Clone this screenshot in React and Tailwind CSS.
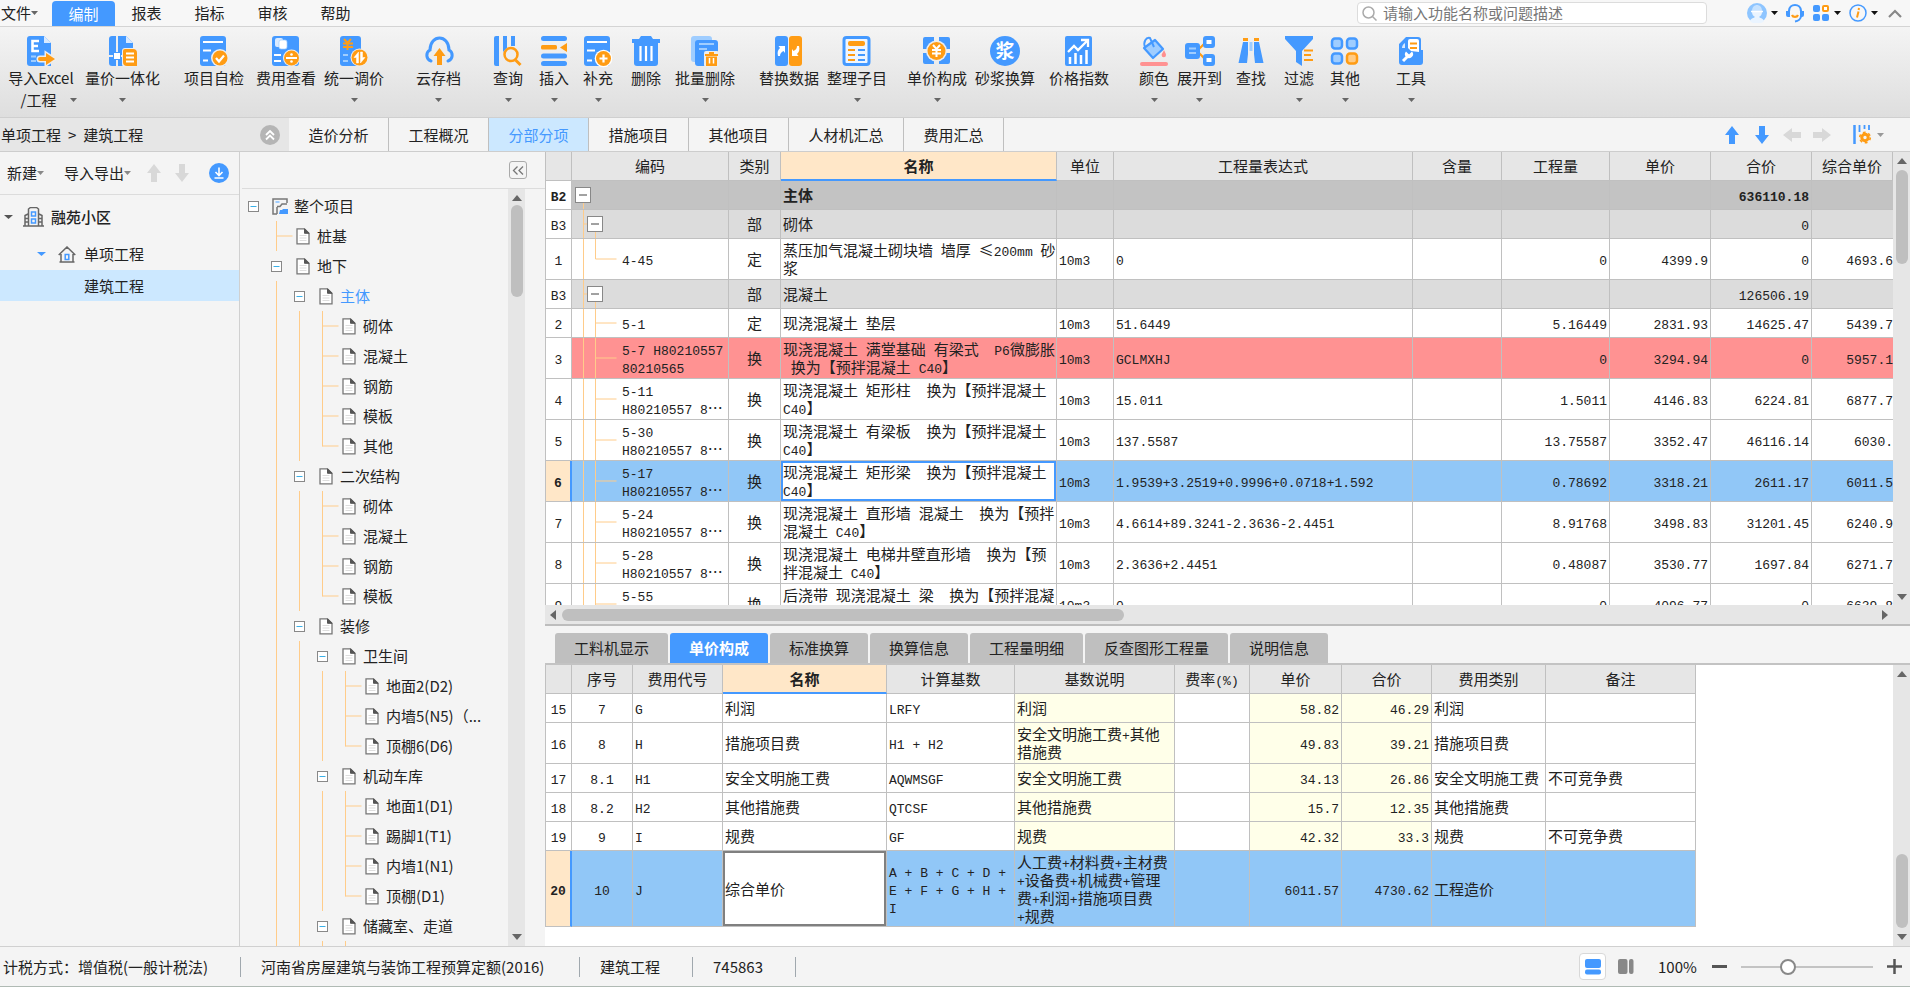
import { useState } from 'react'

const BLUE = '#4499ff'
const ORANGE = '#ff9c14'
const LIGHT = '#9fcdff'

/* ---------- toolbar icons, all on a 30x30 grid ---------- */

function Doc() {
  return <path d="M4 0h14l7 7v23H4a3 3 0 0 1-3-3V3a3 3 0 0 1 3-3z" fill={BLUE} />
}

const ICONS = {
  excel: (
    <>
      <Doc />
      <path d="M18 0l7 7h-7z" fill="#d9eaff" />
      <path d="M13 5H6.500v10H13M7 10h5" stroke="#fff" strokeWidth="2.600" fill="none" />
      <path d="M5 20.500h5M5 25h5" stroke={LIGHT} strokeWidth="2" />
      <path d="M14 21h6v-4l9 6-9 6v-4h-6a2 2 0 0 1 0-4z" fill="#eee" stroke="#eee" strokeWidth="3" />
      <path d="M14 21h6v-4l9 6-9 6v-4h-6a2 2 0 0 1 0-4z" fill={ORANGE} />
    </>
  ),
  merge: (
    <>
      <Doc />
      <path d="M18 0l7 7h-7z" fill="#d9eaff" />
      <path d="M9 0v30M0 20h16" stroke="#eee" strokeWidth="2" />
      <rect x="5.500" y="16.500" width="7" height="7" fill="#fff" stroke={BLUE} />
      <rect x="14" y="12" width="15" height="19" rx="3" fill="#eee" />
      <path d="M17 13h8a4 4 0 0 1 4 4v13H19a4 4 0 0 1-4-4V15a2 2 0 0 1 2-2z" fill={ORANGE} />
      <path d="M18 17.500h8M18 21.500h8M18 25.500h8" stroke="#fff" strokeWidth="1.800" />
    </>
  ),
  check: (
    <>
      <rect x="1" width="26" height="30" rx="3" fill={BLUE} />
      <path d="M4 6h20M4 14.500h8M4 24.500h5" stroke="#fff" strokeWidth="2" />
      <circle cx="21" cy="22" r="9" fill="#eee" />
      <circle cx="21" cy="22" r="7.500" fill={ORANGE} />
      <path d="M17 22l3 3.500 5-6" stroke="#fff" strokeWidth="2.200" fill="none" />
    </>
  ),
  fee: (
    <>
      <rect x="1" width="27" height="30" rx="3" fill={BLUE} />
      <rect x="4" y="2" width="8" height="9" rx="2" fill="#d9eaff" />
      <rect x="8" y="4" width="8" height="9" rx="2" fill="#fff" stroke={LIGHT} strokeWidth=".7" />
      <path d="M3 19h7M3 25h7" stroke="#fff" strokeWidth="2" />
      <circle cx="20.500" cy="22" r="8.500" fill="#eee" />
      <circle cx="20.500" cy="22" r="7.500" fill={ORANGE} />
      <path d="M15 22h11" stroke="#fff" strokeWidth="2" />
      <circle cx="20.500" cy="18.500" r="1.300" fill="#fff" />
      <circle cx="20.500" cy="25.500" r="1.300" fill="#fff" />
    </>
  ),
  adjust: (
    <>
      <rect x="1" width="21" height="30" rx="3" fill={BLUE} />
      <path d="M5 3l3.500 4L12 3M4 7.500h10M4 11h10M8.500 6v8" stroke={ORANGE} strokeWidth="2" fill="none" />
      <path d="M4 19h5M4 25h5" stroke={LIGHT} strokeWidth="2" />
      <circle cx="20.500" cy="21.500" r="9" fill="#eee" />
      <circle cx="20.500" cy="21.500" r="8" fill={ORANGE} />
      <path d="M19.500 16v11h-2v-5.500h-2.500zM21.500 27V16h2v5.500H26z" fill="#fff" stroke="#fff" strokeWidth=".5" />
    </>
  ),
  cloud: (
    <>
      <path d="M7 25a6 6 0 0 1-1-11C6 6 11 2 15.500 2S25 6 25 14a6 6 0 0 1-1 11" stroke={BLUE} strokeWidth="3" fill="none" strokeLinecap="round" />
      <path d="M15.500 12l6 8h-3.500v9h-5v-9H9.500z" fill={ORANGE} />
    </>
  ),
  query: (
    <>
      <path d="M3 0h3v30H3a2 2 0 0 1-2-2V2a2 2 0 0 1 2-2zM10 0h4v12l-4 4zM18 0h4v10h-4z" fill={BLUE} />
      <circle cx="18" cy="18.500" r="6.500" stroke={ORANGE} strokeWidth="2.500" fill="#eee" />
      <path d="M22.500 24l5 5" stroke={ORANGE} strokeWidth="3" />
    </>
  ),
  insert: (
    <>
      <rect x="2" width="26" height="5" rx="2.500" fill={BLUE} />
      <rect x="2" y="9" width="16" height="4.500" rx="1.500" fill={ORANGE} />
      <path d="M28 7v9l-7-4.500z" fill={ORANGE} />
      <rect x="2" y="17.500" width="26" height="5" rx="2.500" fill={BLUE} />
      <rect x="2" y="25" width="26" height="5" rx="2.500" fill={BLUE} />
    </>
  ),
  add: (
    <>
      <rect x="1" width="26" height="30" rx="3" fill={BLUE} />
      <path d="M4 6h20M4 14.500h8M4 24.500h5" stroke="#fff" strokeWidth="2" />
      <circle cx="20.500" cy="22.500" r="8.800" fill="#fff" />
      <circle cx="20.500" cy="22.500" r="7.500" fill={ORANGE} />
      <path d="M16.500 22.500h8M20.500 18.500v8" stroke="#fff" strokeWidth="2.200" />
    </>
  ),
  trash: (
    <>
      <path d="M10 0h10l2 3h7v4H1V3h7z" fill={BLUE} />
      <path d="M3 7h24v20a3 3 0 0 1-3 3H6a3 3 0 0 1-3-3z" fill={BLUE} />
      <path d="M9.500 10v15M15 10v15M20.500 10v15" stroke="#fff" strokeWidth="2.200" />
    </>
  ),
  batch: (
    <>
      <rect x="1" width="21" height="26" rx="3" fill={LIGHT} />
      <rect x="5" y="4" width="23" height="26" rx="3" fill={BLUE} />
      <path d="M9 8h15M9 13h8" stroke={LIGHT} strokeWidth="2" />
      <rect x="14" y="15" width="15" height="16" rx="2" fill="#eee" />
      <path d="M15 18h13v2H15zM16 20.500h11V30H16zM19 16h5v2h-5z" fill={ORANGE} />
      <path d="M19.500 22v5.500M23.500 22v5.500" stroke="#fff" strokeWidth="1.500" />
    </>
  ),
  replace: (
    <>
      <rect x="1" width="13" height="30" rx="3" fill={BLUE} />
      <rect x="15" width="13" height="30" rx="3" fill={ORANGE} />
      <path d="M4 20c-1-4 0-6 2-8l-1.500-2H11v7l-1.500-2C7 16 6 18 6 20z" fill="#fff" />
      <path d="M25 10c1 4 0 6-2 8l1.500 2H18v-7l1.500 2c2.500-1 3.500-3 3.500-5z" fill="#fff" />
    </>
  ),
  sort: (
    <>
      <rect x="2" y="1.500" width="25" height="27" rx="2.500" fill="#eef5ff" stroke={BLUE} strokeWidth="3" />
      <rect x="6" y="5" width="17" height="5" rx="2" fill={ORANGE} />
      <path d="M6 14h7M6 19h7M6 24h7" stroke={ORANGE} strokeWidth="2" />
      <path d="M16 14h7M16 19h7M16 24h7" stroke={BLUE} strokeWidth="2" />
    </>
  ),
  price: (
    <>
      <path d="M1 3a2 2 0 0 1 2-2h9v6l-6 6H1zM17 1h9a2 2 0 0 1 2 2v10h-5l-6-6zM1 17h5l6 6v5H3a2 2 0 0 1-2-2zM28 17v9a2 2 0 0 1-2 2h-9v-5l6-6z" fill={BLUE} />
      <circle cx="14.500" cy="15" r="10.500" fill="#eee" />
      <circle cx="14.500" cy="15" r="9" fill={ORANGE} />
      <path d="M11 9l3.500 4L18 9M10 14h9M10 17.500h9M14.500 13v8" stroke="#fff" strokeWidth="2" fill="none" />
    </>
  ),
  mortar: (
    <>
      <circle cx="15" cy="15" r="15" fill={BLUE} />
      <text x="15" y="22" textAnchor="middle" fontSize="19" fontWeight="700" fill="#fff">浆</text>
    </>
  ),
  index: (
    <>
      <rect x="1" width="27" height="30" rx="2" fill={BLUE} />
      <path d="M4 16l6-6 4 4 9-9M17 4h7v7" stroke="#fff" strokeWidth="2.300" fill="none" />
      <path d="M6 28v-7M11.500 28V17M17 28v-9M22.500 28V14" stroke="#fff" strokeWidth="2.500" />
    </>
  ),
  color: (
    <>
      <path d="M5 12L16 4l8 9-10 9z" fill={LIGHT} stroke={BLUE} strokeWidth="2.200" strokeLinejoin="round" />
      <path d="M6 11C4 6 7 1 11 2l4 9" stroke={BLUE} strokeWidth="2" fill="none" />
      <path d="M25 14c1.500 3 2 4 2 5a2.200 2.200 0 0 1-4.400 0c0-1 1-2 2.400-5z" fill="#ff8f8f" />
      <rect x="1" y="26" width="28" height="4" rx="2" fill="#ff9292" />
    </>
  ),
  expand: (
    <>
      <path d="M14 13l6-6M14 17l6 6" stroke={ORANGE} strokeWidth="2.200" />
      <rect x="0" y="7" width="15" height="16" rx="3" fill={BLUE} />
      <path d="M4 12.500h7M4 17h7" stroke={LIGHT} strokeWidth="2" />
      <rect x="18" y="0" width="12" height="12" rx="3" fill={BLUE} />
      <rect x="18" y="18" width="12" height="12" rx="3" fill={BLUE} />
      <rect x="21.500" y="4" width="5" height="4" fill="#fff" />
      <rect x="21.500" y="22" width="5" height="4" fill="#fff" />
    </>
  ),
  find: (
    <>
      <path d="M7 2h5v3H7zM18 2h5v3h-5z" fill={ORANGE} />
      <path d="M7 6h5v12l-1 9H2.500zM18 6h5l4.500 21H19l-1-9z" fill={BLUE} />
      <path d="M13.500 6h3v9h-3z" fill={LIGHT} />
    </>
  ),
  filter: (
    <>
      <path d="M1 0h28v3L18 15v15l-6-4V15L1 3z" fill={BLUE} />
      <path d="M20 14.500h9M20 19h7M20 24h9" stroke={ORANGE} strokeWidth="2" />
    </>
  ),
  other: (
    <>
      <rect x="2" y="2.500" width="10" height="10" rx="3" fill={LIGHT} stroke={BLUE} strokeWidth="2.500" />
      <rect x="17" y="2.500" width="10" height="10" rx="3" fill={LIGHT} stroke={BLUE} strokeWidth="2.500" />
      <rect x="2" y="17.500" width="10" height="10" rx="3" fill={LIGHT} stroke={BLUE} strokeWidth="2.500" />
      <rect x="17" y="17.500" width="10" height="10" rx="3" fill="#ffcb85" stroke={ORANGE} strokeWidth="2.500" />
    </>
  ),
  tool: (
    <>
      <path d="M3 26V8l7-7h12a3 3 0 0 1 3 3v10h2v12a3 3 0 0 1-3 3H6a3 3 0 0 1-3-3z" fill={BLUE} />
      <path d="M12 5a2 2 0 0 1 2-2h7a2 2 0 0 1 2 2v11l-8-1-3-3z" fill="#fff" />
      <path d="M14 7.500h7M14 12h7" stroke={ORANGE} strokeWidth="2.200" />
      <path d="M6 12c0-2 1-4 3-5v5z" fill="#d9eaff" />
      <path d="M7 25l6-6" stroke="#fff" strokeWidth="3" />
      <path d="M10 15.500l3 3 3-3a4 4 0 1 1-6 0z" fill="#fff" />
    </>
  ),
}

function Icon({ name }) {
  return (
    <svg width="30" height="30" viewBox="0 0 30 30" className="shrink-0 overflow-visible" aria-hidden="true">
      {ICONS[name]}
    </svg>
  )
}

function Caret({ color = '#666', size = 7 }) {
  return (
    <svg width={size} height="4" viewBox="0 0 8 4" preserveAspectRatio="none" className="shrink-0" aria-hidden="true">
      <path d="M0 0h8L4 4z" fill={color} />
    </svg>
  )
}

const TOOLS = [
  { icon: 'excel', label: '导入Excel', second: '/工程', drop: true, box: 'w-[72px] ml-[5px]' },
  { icon: 'merge', label: '量价一体化', drop: true, box: 'w-[75px] ml-2' },
  { icon: 'check', label: '项目自检', box: 'w-[60px] ml-6' },
  { icon: 'fee', label: '费用查看', box: 'w-[60px] ml-3' },
  { icon: 'adjust', label: '统一调价', drop: true, box: 'w-[60px] ml-2' },
  { icon: 'cloud', label: '云存档', drop: true, box: 'w-[45px] ml-8' },
  { icon: 'query', label: '查询', drop: true, box: 'w-[30px] ml-8' },
  { icon: 'insert', label: '插入', drop: true, box: 'w-[30px] ml-4' },
  { icon: 'add', label: '补充', drop: true, box: 'w-[30px] ml-3.5' },
  { icon: 'trash', label: '删除', box: 'w-[30px] ml-4.5' },
  { icon: 'batch', label: '批量删除', drop: true, box: 'w-[60px] ml-3.5' },
  { icon: 'replace', label: '替换数据', box: 'w-[60px] ml-6' },
  { icon: 'sort', label: '整理子目', drop: true, box: 'w-[60px] ml-2' },
  { icon: 'price', label: '单价构成', drop: true, box: 'w-[60px] ml-5' },
  { icon: 'mortar', label: '砂浆换算', box: 'w-[60px] ml-2' },
  { icon: 'index', label: '价格指数', box: 'w-[60px] ml-3.5' },
  { icon: 'color', label: '颜色', drop: true, box: 'w-[30px] ml-7.5' },
  { icon: 'expand', label: '展开到', drop: true, box: 'w-[45px] ml-2' },
  { icon: 'find', label: '查找', box: 'w-[30px] ml-3.5' },
  { icon: 'filter', label: '过滤', drop: true, box: 'w-[30px] ml-4.5' },
  { icon: 'other', label: '其他', drop: true, box: 'w-[30px] ml-4' },
  { icon: 'tool', label: '工具', drop: true, box: 'w-[30px] ml-9' },
]

function MenuBar() {
  return (
    <header className="flex h-[27px] shrink-0 items-center border-b border-[#d4d4d4] bg-[#f7f7f7]">
      <button className="flex w-[52px] items-center pl-px">
        文件
        <Caret />
      </button>
      {['编制', '报表', '指标', '审核', '帮助'].map((m, i) => (
        <button
          key={m}
          className={i === 0 ? 'mt-px h-[25px] w-[63px] rounded-t-[4px] bg-[#4499ff] text-white' : 'h-[25px] w-[63px]'}
        >
          {m}
        </button>
      ))}
      <label className="ml-auto flex h-[22px] w-[350px] items-center gap-1.5 rounded-[4px] border border-[#dcdcdc] bg-white pl-1">
        <svg width="15" height="15" viewBox="0 0 15 15" fill="none" stroke="#aaa" strokeWidth="1.500" aria-hidden="true">
          <circle cx="6.500" cy="6.500" r="5.500" />
          <path d="M10.500 10.500l4 4" />
        </svg>
        <input
          aria-label="搜索"
          placeholder="请输入功能名称或问题描述"
          className="h-5 min-w-0 flex-1 bg-transparent outline-none placeholder:text-[#777]"
        />
      </label>
      <div className="ml-10 flex items-center pr-2">
        <button aria-label="用户" className="flex items-center gap-1">
          <svg width="20" height="20" viewBox="0 0 20 20">
            <circle cx="10" cy="10" r="10" fill="#8ec5ff" />
            <path d="M3 18c1-3 4-3 5-4-2-1-3-3-3-5h10c0 2-1 4-3 5 1 1 4 1 5 4a10 10 0 0 1-14 0z" fill="#eaf4ff" />
            <path d="M5 8c0-8 10-8 10 0z" fill="#c6e2ff" />
            <path d="M4 8.500h12" stroke="#fff" strokeWidth="1.500" />
          </svg>
          <Caret color="#111" />
        </button>
        <button aria-label="客服" className="ml-2">
          <svg width="18" height="20" viewBox="0 0 18 20" fill="none">
            <path d="M3 8C3 0 15 0 15 8" stroke={BLUE} strokeWidth="2.200" />
            <path d="M0 8h4v6H2a2 2 0 0 1-2-2zM14 8h4v4a2 2 0 0 1-2 2h-2z" fill={BLUE} />
            <path d="M15 13c0 3-3 5-6 5.500" stroke={BLUE} strokeWidth="2" />
            <path d="M6 12c1 2.500 5 2.500 6 0" stroke={ORANGE} strokeWidth="2.200" />
          </svg>
        </button>
        <button aria-label="应用" className="ml-2 flex items-center gap-1">
          <svg width="18" height="18" viewBox="0 0 18 18">
            <rect x="1" y="1" width="7" height="7" rx="2" fill={BLUE} />
            <rect x="11" y="2" width="5" height="5" rx="1" fill="#fff" stroke={ORANGE} strokeWidth="2" />
            <rect x="1" y="10" width="7" height="7" rx="2" fill={BLUE} />
            <rect x="10" y="10" width="7" height="7" rx="2" fill={BLUE} />
          </svg>
          <Caret color="#111" />
        </button>
        <button aria-label="关于" className="ml-2 flex items-center gap-1">
          <svg width="18" height="18" viewBox="0 0 18 18" fill="none">
            <circle cx="9" cy="9" r="8" stroke={BLUE} strokeWidth="1.500" />
            <path d="M9.500 7.500L8 13.500M10 4l-.4 2" stroke={ORANGE} strokeWidth="2" />
          </svg>
          <Caret color="#111" />
        </button>
        <button aria-label="收起" className="ml-2.5">
          <svg width="14" height="9" viewBox="0 0 14 9" fill="none" stroke="#888" strokeWidth="2.200">
            <path d="M1 8l6-6 6 6" />
          </svg>
        </button>
      </div>
    </header>
  )
}

function Toolbar() {
  return (
    <div className="flex h-[91px] shrink-0 items-start border-b border-[#cfcfcf] bg-linear-to-b from-[#f4f4f4] to-[#dedede] pt-[9px]">
      {TOOLS.map(({ icon, label, second, drop, box }) => (
        <button key={label} className={`flex shrink-0 flex-col items-center whitespace-nowrap ${box}`}>
          <Icon name={icon} />
          <span className="mt-px leading-[22px]">{label}</span>
          <span className="flex h-[22px] items-center gap-3.5">
            {second && <span className="ml-4">{second}</span>}
            {drop && <Caret />}
          </span>
        </button>
      ))}
    </div>
  )
}

function Arrow({ dir, color = '#d8d8d8' }) {
  const turn = { up: 'rotate-0', down: 'rotate-180', left: '-rotate-90', right: 'rotate-90' }[dir]
  return (
    <svg width="14" height="18" viewBox="0 0 14 18" className={turn} aria-hidden="true">
      <path d="M7 0l7 9h-4v9H4V9H0z" fill={color} />
    </svg>
  )
}

const TABS = ['造价分析', '工程概况', '分部分项', '措施项目', '其他项目', '人材机汇总', '费用汇总']

function TabRow() {
  const [tab, setTab] = useState('分部分项')
  return (
    <div className="flex h-[34px] shrink-0 border-b border-[#cdcdcd]">
      <div className="flex w-[289px] items-center justify-between bg-[#e6e6e6] pr-[9px] pl-px">
        <span className="flex gap-[7px]">
          <span>单项工程</span>
          <span>&gt;</span>
          <span>建筑工程</span>
        </span>
        <button aria-label="收起导航">
          <svg width="20" height="20" viewBox="0 0 20 20" fill="none">
            <circle cx="10" cy="10" r="10" fill="#b5b5b5" />
            <path d="M6 10l4-4 4 4M6 14.500l4-4 4 4" stroke="#fff" strokeWidth="1.800" />
          </svg>
        </button>
      </div>
      {TABS.map((t) => (
        <button
          key={t}
          onClick={() => setTab(t)}
          className={`border-r border-[#bfbfbf] px-[19px] ${t.length === 4 ? 'w-[100px]' : 'w-[115px]'} ${
            t === tab ? 'bg-[#cce8ff] text-[#4499ff]' : ''
          }`}
        >
          {t}
        </button>
      ))}
      <div className="ml-auto flex items-center gap-4 pr-[26px]">
        <button aria-label="上移"><Arrow dir="up" color={BLUE} /></button>
        <button aria-label="下移"><Arrow dir="down" color={BLUE} /></button>
        <button aria-label="后退"><Arrow dir="left" /></button>
        <button aria-label="前进"><Arrow dir="right" /></button>
        <button aria-label="列设置" className="ml-2 flex items-center gap-1.5">
          <svg width="18" height="19" viewBox="0 0 18 19">
            <path d="M1.500 0v19" stroke={BLUE} strokeWidth="2.500" />
            <path d="M6.500 0v7M11.500 0v4M16 0v5" stroke={BLUE} strokeWidth="1.800" />
            <circle cx="12" cy="12.500" r="3.200" fill="none" stroke={ORANGE} strokeWidth="3" />
            <circle cx="12" cy="12.500" r="5.300" fill="none" stroke={ORANGE} strokeWidth="1.600" strokeDasharray="2.800 2.750" />
          </svg>
          <Caret color="#999" />
        </button>
      </div>
    </div>
  )
}

/* ---------- left panels ---------- */

function ProjectPanel() {
  return (
    <aside className="flex w-60 shrink-0 flex-col border-r border-[#d0d0d0]">
      <div className="flex h-[43px] items-center border-b border-[#dcdcdc] pr-2.5 pl-[7px]">
        <button className="flex items-center">新建<Caret color="#888" /></button>
        <button className="ml-5 flex items-center">导入导出<Caret color="#888" /></button>
        <button aria-label="上移" className="ml-4"><Arrow dir="up" /></button>
        <button aria-label="下移" className="ml-3.5"><Arrow dir="down" /></button>
        <button aria-label="下载" className="ml-auto">
          <svg width="20" height="20" viewBox="0 0 20 20" fill="none">
            <circle cx="10" cy="10" r="10" fill={BLUE} />
            <path d="M10 4.500v7.500M6.500 9l3.500 3.500L13.500 9M5.500 15h9" stroke="#fff" strokeWidth="1.600" />
          </svg>
        </button>
      </div>
      <div className="flex h-[43px] items-center pl-1">
        <Caret color="#555" size={9} />
        <svg width="21" height="20" viewBox="0 0 21 20" fill="none" className="ml-2.5" aria-hidden="true">
          <path d="M0 19h21M5.500 19V2l2-1.500h6L15.500 2v17M2 19V8.500l3-1.500M19 19V8.500L16 7M2 11.500h3M2 15h3M16 11.500h3M16 15h3" stroke="#666" strokeWidth="1.500" />
          <path d="M8.500 5h4v4h-4zM8.500 12h4v4h-4z" stroke={BLUE} strokeWidth="1.500" />
        </svg>
        <span className="ml-[7px] font-medium">融苑小区</span>
      </div>
      <div className="flex h-8 items-center pl-[37px]">
        <Caret color={BLUE} size={9} />
        <svg width="18" height="17" viewBox="0 0 18 17" fill="none" className="ml-3" aria-hidden="true">
          <path d="M.7 9L9 1l8.300 8M3 8v8M15 8v8M1.500 16h15" stroke="#666" strokeWidth="1.500" />
          <path d="M7.200 8.500h3.600v5H7.200z" stroke={BLUE} strokeWidth="1.500" />
        </svg>
        <span className="ml-2">单项工程</span>
      </div>
      <div className="flex h-[31px] items-center bg-[#cce8ff] pl-[84px]">建筑工程</div>
    </aside>
  )
}

// guide letters: blank "_", vertical "|", tee "+", elbow "L", expander "-"
const TREE = [
  ['-', '整个项目'],
  ['_+', '桩基'],
  ['_-', '地下'],
  ['_|-', '主体'],
  ['_||+', '砌体'],
  ['_||+', '混凝土'],
  ['_||+', '钢筋'],
  ['_||+', '模板'],
  ['_||L', '其他'],
  ['_|-', '二次结构'],
  ['_||+', '砌体'],
  ['_||+', '混凝土'],
  ['_||+', '钢筋'],
  ['_||L', '模板'],
  ['_|-', '装修'],
  ['_||-', '卫生间'],
  ['_|||+', '地面2(D2)'],
  ['_|||+', '内墙5(N5)（...'],
  ['_|||L', '顶棚6(D6)'],
  ['_||-', '机动车库'],
  ['_|||+', '地面1(D1)'],
  ['_|||+', '踢脚1(T1)'],
  ['_|||+', '内墙1(N1)'],
  ['_|||L', '顶棚(D1)'],
  ['_||-', '储藏室、走道'],
  ['_||||', ''],
]

const GUIDES = {
  '|': 'M11.500 0v30',
  '+': 'M11.500 0v30M11.500 15h16',
  L: 'M11.500 0v15.500M11.500 15h16',
}

function Guide({ kind }) {
  if (kind === '_') return <span className="w-[23px]" />
  if (kind === '-') {
    return (
      <button aria-label="折叠" className="flex w-[23px] items-center justify-center">
        <svg width="11" height="11" viewBox="0 0 11 11">
          <rect x=".5" y=".5" width="10" height="10" fill="#fff" stroke="#888" />
          <path d="M2.500 5.500h6" stroke="#3ab0e8" />
        </svg>
      </button>
    )
  }
  return (
    <svg width="23" height="30" className="shrink-0 overflow-visible" aria-hidden="true">
      <path d={GUIDES[kind]} stroke="#ffcc8a" strokeWidth="1" fill="none" />
    </svg>
  )
}

function PageIcon() {
  return (
    <svg width="16" height="17" viewBox="0 0 16 17" fill="none" aria-hidden="true">
      <path d="M2 .8h7.500l4.500 4.500v10.500H2z" fill="#fff" stroke="#777" strokeWidth="1.300" />
      <path d="M9.500.8v4.500H14z" fill="#555" stroke="#555" />
      <path d="M4.500 7.500h7M4.500 10h7M4.500 12.500h7" stroke="#ddd" />
    </svg>
  )
}

function RootIcon() {
  return (
    <svg width="16" height="17" viewBox="0 0 16 17" fill="none" aria-hidden="true">
      <path d="M15 5V1H1v15h4M5 8.500h3L10 6h5M5 16V9" stroke="#777" strokeWidth="1.500" />
      <path d="M3.500 4h4" stroke={LIGHT} strokeWidth="2" />
      <path d="M7 16l1-4h2l1-1h5v5z" fill={BLUE} />
    </svg>
  )
}

function VScroll({ className = '', children }) {
  return (
    <div className={`flex w-[17px] shrink-0 flex-col items-center justify-between bg-[#e6e6e6] py-1.5 ${className}`}>
      <svg width="10" height="6" viewBox="0 0 10 6" aria-hidden="true"><path d="M5 0l5 6H0z" fill="#666" /></svg>
      {children}
      <svg width="10" height="6" viewBox="0 0 10 6" aria-hidden="true"><path d="M5 6l5-6H0z" fill="#666" /></svg>
    </div>
  )
}

function TreePanel() {
  return (
    <aside className="flex w-[305px] shrink-0 flex-col pl-0.5">
      <div className="flex h-[37px] shrink-0 items-center justify-end border-b border-[#dcdcdc] pr-[18px]">
        <button aria-label="收起目录" className="flex size-[18px] items-center justify-center rounded-[3px] border border-[#aaa]">
          <svg width="12" height="9" viewBox="0 0 12 9" fill="none" stroke="#777" strokeWidth="1.300">
            <path d="M5.500.5l-4 4 4 4M11 .5l-4 4 4 4" />
          </svg>
        </button>
      </div>
      <div className="flex min-h-0 flex-1 pr-5">
        <ul className="min-w-0 flex-1 overflow-hidden pt-0.5">
          {TREE.map(([guides, label], i) => (
            <li key={i} className="flex h-[30px]">
              {[...guides].map((g, k) => <Guide key={k} kind={g} />)}
              {label && (
                <span className={`ml-[7px] flex items-center gap-1.5 whitespace-nowrap ${label === '主体' ? 'text-[#4499ff]' : ''}`}>
                  {i === 0 ? <RootIcon /> : <PageIcon />}
                  {label}
                </span>
              )}
            </li>
          ))}
        </ul>
        <VScroll>
          <div className="mt-1 mb-auto h-[92px] w-3 rounded-full bg-[#bfbfbf]" />
        </VScroll>
      </div>
    </aside>
  )
}

/* ---------- grids ---------- */

// Latin runs are set in a narrower mono face than the Chinese around them
function Mixed({ text }) {
  return text.split(/([\x20-\x7e]+)/).map((run, i) =>
    i % 2 ? <span key={i} className="font-['Liberation_Mono',monospace] text-[13px] leading-none">{run}</span> : run
  )
}

const LINE = 'border-r border-b border-[#c0c0c0]'

function Head({ cols, active }) {
  return (
    <thead>
      <tr className="h-[29px]">
        {cols.map((c, i) => (
          <th
            key={i}
            scope="col"
            className={`${LINE} whitespace-nowrap ${
              c === active ? 'border-b-2 border-b-[#4499ff] bg-[#ffe7c8] font-bold' : 'bg-[#e6e6e6] font-normal'
            }`}
          >
            <Mixed text={c} />
          </th>
        ))}
      </tr>
    </thead>
  )
}

function Cell({ text = '', className = '' }) {
  return (
    <td className={`${LINE} overflow-hidden px-0.5 whitespace-pre ${className}`}>
      <Mixed text={text} />
    </td>
  )
}

const ITEM_COLS = ['', '编码', '类别', '名称', '单位', '工程量表达式', '含量', '工程量', '单价', '合价', '综合单价']

const ITEMS = [
  { no: 'B2', level: 'b2', name: '主体', total: '636110.18' },
  { no: 'B3', level: 'b3', type: '部', name: '砌体', total: '0' },
  { no: '1', code: '4-45', last: true, type: '定', name: '蒸压加气混凝土砌块墙 墙厚 ≤200mm 砂\n浆', expr: '0', qty: '0', price: '4399.9', total: '0', full: '4693.6' },
  { no: 'B3', level: 'b3', type: '部', name: '混凝土', total: '126506.19' },
  { no: '2', code: '5-1', single: true, type: '定', name: '现浇混凝土 垫层', expr: '51.6449', qty: '5.16449', price: '2831.93', total: '14625.47', full: '5439.7' },
  { no: '3', code: '5-7 H80210557\n80210565', tone: 'red', type: '换', name: '现浇混凝土 满堂基础 有梁式  P6微膨胀\n 换为【预拌混凝土 C40】', expr: 'GCLMXHJ', qty: '0', price: '3294.94', total: '0', full: '5957.1' },
  { no: '4', code: '5-11\nH80210557 8…', type: '换', name: '现浇混凝土 矩形柱  换为【预拌混凝土\nC40】', expr: '15.011', qty: '1.5011', price: '4146.83', total: '6224.81', full: '6877.7' },
  { no: '5', code: '5-30\nH80210557 8…', type: '换', name: '现浇混凝土 有梁板  换为【预拌混凝土\nC40】', expr: '137.5587', qty: '13.75587', price: '3352.47', total: '46116.14', full: '6030.' },
  { no: '6', code: '5-17\nH80210557 8…', tone: 'blue', type: '换', name: '现浇混凝土 矩形梁  换为【预拌混凝土\nC40】', expr: '1.9539+3.2519+0.9996+0.0718+1.592', qty: '0.78692', price: '3318.21', total: '2611.17', full: '6011.5' },
  { no: '7', code: '5-24\nH80210557 8…', type: '换', name: '现浇混凝土 直形墙 混凝土  换为【预拌\n混凝土 C40】', expr: '4.6614+89.3241-2.3636-2.4451', qty: '8.91768', price: '3498.83', total: '31201.45', full: '6240.9' },
  { no: '8', code: '5-28\nH80210557 8…', type: '换', name: '现浇混凝土 电梯井壁直形墙  换为【预\n拌混凝土 C40】', expr: '2.3636+2.4451', qty: '0.48087', price: '3530.77', total: '1697.84', full: '6271.7' },
  { no: '9', code: '5-55\n ', type: '换', name: '后浇带 现浇混凝土 梁  换为【预拌混凝\n ', expr: '0', qty: '0', price: '4096.77', total: '0', full: '6639.8' },
]

function CodeGuide({ row, h }) {
  const mid = h / 2
  let lines = `M11.500 0v${h}M23.500 0v${row.last ? mid : h}M23.500 ${mid}h21`
  if (row.level === 'b2') lines = `M11.500 ${mid}v${h - mid}`
  if (row.level === 'b3') lines = `M11.500 0v${h}M11.500 ${mid}h12M23.500 ${mid}v${h - mid}`
  const boxX = row.level === 'b2' ? 3.5 : 15.5
  const drawing = (
    <svg width="45" height={h} className="block shrink-0" aria-hidden="true">
      <path d={lines} stroke="#ffcc8a" fill="none" />
      {row.level && (
        <>
          <rect x={boxX} y={mid - 7.5} width="15" height="15" fill="#fff" stroke="#888" />
          <path d={`M${boxX + 3.5} ${mid}h8`} stroke="#444" />
        </>
      )}
    </svg>
  )
  return row.level ? <button aria-label="折叠" className="block shrink-0">{drawing}</button> : drawing
}

function ItemRow({ row }) {
  const single = row.level || row.single
  const bg = row.level === 'b2' ? 'bg-[#c3c3c3] font-bold' : row.level ? 'bg-[#dcdcdc]' : row.tone === 'red' ? 'bg-[#ff9292]' : row.tone === 'blue' ? 'bg-[#91c7f7]' : 'bg-white'
  const on = row.tone === 'blue'
  return (
    <tr className={`${single ? 'h-[29px]' : 'h-[41px]'} ${bg}`}>
      <Cell text={row.no} className={`text-center ${on ? 'border-r-2 border-r-[#4499ff] bg-[#ffe7c8] font-bold' : 'bg-white'}`} />
      <td className={`${LINE} overflow-hidden`}>
        <div className="flex items-center gap-[5px]">
          <CodeGuide row={row} h={single ? 28 : 40} />
          <span className="whitespace-pre"><Mixed text={row.code || ''} /></span>
        </div>
      </td>
      <Cell text={row.type} className="text-center" />
      <Cell text={row.name} className={on ? 'bg-white shadow-[inset_0_0_0_2px_#4499ff]' : ''} />
      <Cell text={row.level ? '' : '10m3'} />
      <Cell text={row.expr} />
      <Cell />
      <Cell text={row.qty} className="text-right" />
      <Cell text={row.price} className="text-right" />
      <Cell text={row.total} className="text-right" />
      <td className="overflow-hidden border-b border-[#c0c0c0] text-right whitespace-pre"><Mixed text={row.full || ''} /></td>
    </tr>
  )
}

function ItemGrid() {
  return (
    <section className="flex min-h-0 flex-1">
      <div className="flex min-w-0 flex-1 flex-col">
        <div className="min-h-0 flex-1 overflow-hidden border-l border-[#c0c0c0] bg-white">
          <table className="w-full table-fixed border-separate border-spacing-0 leading-[18px]">
            <colgroup>
              <col className="w-[26px]" />
              <col className="w-[157px]" />
              <col className="w-[52px]" />
              <col className="w-[276px]" />
              <col className="w-[57px]" />
              <col />
              <col className="w-[89px]" />
              <col className="w-[108px]" />
              <col className="w-[101px]" />
              <col className="w-[101px]" />
              <col className="w-[81px]" />
            </colgroup>
            <Head cols={ITEM_COLS} active="名称" />
            <tbody>
              {ITEMS.map((row, i) => <ItemRow key={i} row={row} />)}
            </tbody>
          </table>
        </div>
        <div className="flex h-[19px] shrink-0 items-center gap-1.5 bg-[#e6e6e6] px-[5px]">
          <svg width="6" height="10" viewBox="0 0 6 10" aria-hidden="true"><path d="M6 0v10L0 5z" fill="#666" /></svg>
          <div className="h-3 w-[42%] rounded-full bg-[#bfbfbf]" />
          <svg width="6" height="10" viewBox="0 0 6 10" className="ml-auto" aria-hidden="true"><path d="M0 0v10l6-5z" fill="#666" /></svg>
        </div>
      </div>
      <VScroll className="pb-6">
        <div className="mt-1.5 mb-auto h-[94px] w-3 rounded-full bg-[#bfbfbf]" />
      </VScroll>
    </section>
  )
}

const DETAIL_TABS = ['工料机显示', '单价构成', '标准换算', '换算信息', '工程量明细', '反查图形工程量', '说明信息']

const FEE_COLS = ['', '序号', '费用代号', '名称', '计算基数', '基数说明', '费率(%)', '单价', '合价', '费用类别', '备注']

const FEES = [
  ['15', '7', 'G', '利润', 'LRFY', '利润', '58.82', '46.29', '利润', ''],
  ['16', '8', 'H', '措施项目费', 'H1 + H2', '安全文明施工费+其他\n措施费', '49.83', '39.21', '措施项目费', ''],
  ['17', '8.1', 'H1', '安全文明施工费', 'AQWMSGF', '安全文明施工费', '34.13', '26.86', '安全文明施工费', '不可竞争费'],
  ['18', '8.2', 'H2', '其他措施费', 'QTCSF', '其他措施费', '15.7', '12.35', '其他措施费', ''],
  ['19', '9', 'I', '规费', 'GF', '规费', '42.32', '33.3', '规费', '不可竞争费'],
  ['20', '10', 'J', '综合单价', 'A + B + C + D +\nE + F + G + H +\nI', '人工费+材料费+主材费\n+设备费+机械费+管理\n费+利润+措施项目费\n+规费', '6011.57', '4730.62', '工程造价', ''],
]

const ROW_HEIGHT = { 16: 'h-[41px]', 20: 'h-[76px]' }

function FeeGrid() {
  const [tab, setTab] = useState('单价构成')
  return (
    <section className="shrink-0 border-t-2 border-[#bdbdbd]">
      <div className="flex gap-0.5 border-b-2 border-[#c3c3c3] pt-[7px] pl-2.5">
        {DETAIL_TABS.map((t) => (
          <button
            key={t}
            onClick={() => setTab(t)}
            className={`h-[30px] rounded-t-[3px] px-[19px] ${t === tab ? 'bg-[#4499ff] font-bold text-white' : 'bg-[#bfbfbf]'}`}
          >
            {t}
          </button>
        ))}
      </div>
      <div className="flex h-[281px] bg-white">
        <div className="min-w-0 flex-1 overflow-hidden">
          <table className="w-[1151px] table-fixed border-separate border-spacing-0 border-l border-[#c0c0c0] leading-[18px]">
            <colgroup>
              <col className="w-[26px]" />
              <col className="w-[61px]" />
              <col className="w-[90px]" />
              <col className="w-[164px]" />
              <col className="w-[128px]" />
              <col className="w-[160px]" />
              <col className="w-[75px]" />
              <col className="w-[92px]" />
              <col className="w-[90px]" />
              <col className="w-[114px]" />
              <col className="w-[150px]" />
            </colgroup>
            <Head cols={FEE_COLS} active="名称" />
            <tbody>
              {FEES.map(([no, seq, code, name, base, note, price, total, kind, remark]) => {
                const on = no === '20'
                const tint = on ? '' : 'bg-[#ffffe9]'
                return (
                  <tr key={no} className={`${ROW_HEIGHT[no] || 'h-[29px]'} ${on ? 'bg-[#91c7f7]' : ''}`}>
                    <Cell text={no} className={`text-center ${on ? 'border-r-2 border-r-[#4499ff] bg-[#ffe7c8] font-bold' : ''}`} />
                    <Cell text={seq} className="text-center" />
                    <Cell text={code} />
                    <Cell text={name} className={on ? 'bg-white shadow-[inset_0_0_0_2px_#808080]' : ''} />
                    <Cell text={base} />
                    <Cell text={note} className={tint} />
                    <Cell />
                    <Cell text={price} className={`text-right ${tint}`} />
                    <Cell text={total} className={`text-right ${tint}`} />
                    <Cell text={kind} />
                    <Cell text={remark} />
                  </tr>
                )
              })}
            </tbody>
          </table>
        </div>
        <VScroll>
          <div className="mt-auto mb-1.5 h-[74px] w-3 rounded-full bg-[#bfbfbf]" />
        </VScroll>
      </div>
    </section>
  )
}

function StatusBar() {
  const [zoom, setZoom] = useState(34)
  return (
    <footer className="flex h-[41px] shrink-0 items-center border-t border-b border-t-[#d0d0d0] border-b-[#b0bab4] bg-[#f4f4f4] pr-2">
      <span className="w-[241px] border-r border-[#a0a8ae] pl-[3px]">计税方式：增值税(一般计税法)</span>
      <span className="w-[339px] border-r border-[#a0a8ae] pl-5">河南省房屋建筑与装饰工程预算定额(2016)</span>
      <span className="border-r border-[#a0a8ae] pr-8 pl-5">建筑工程</span>
      <span className="border-r border-[#a0a8ae] pr-8 pl-5">745863</span>
      <button aria-label="上下布局" className="ml-auto flex h-[27px] w-[27px] items-center justify-center rounded-[4px] border border-[#d8d8d8] bg-white">
        <svg width="16" height="16" viewBox="0 0 16 16" fill={BLUE}>
          <rect width="16" height="9" rx="2" />
          <rect y="10.500" width="16" height="5" rx="2" />
        </svg>
      </button>
      <button aria-label="左右布局" className="ml-3">
        <svg width="16" height="15" viewBox="0 0 16 15" fill="#888">
          <rect width="9.500" height="15" rx="2" />
          <rect x="11" width="4.500" height="15" rx="2" />
        </svg>
      </button>
      <span className="ml-6 w-10">100%</span>
      <button aria-label="缩小" className="ml-3.5">
        <svg width="15" height="3"><path d="M0 1.500h15" stroke="#555" strokeWidth="3" /></svg>
      </button>
      <input
        type="range"
        aria-label="缩放"
        value={zoom}
        onChange={(e) => setZoom(Number(e.target.value))}
        className="mx-3.5 h-4 w-[132px] appearance-none bg-transparent [&::-webkit-slider-runnable-track]:h-0.5 [&::-webkit-slider-runnable-track]:bg-[#c3c3c3] [&::-webkit-slider-thumb]:-mt-[7px] [&::-webkit-slider-thumb]:size-4 [&::-webkit-slider-thumb]:appearance-none [&::-webkit-slider-thumb]:rounded-full [&::-webkit-slider-thumb]:border-2 [&::-webkit-slider-thumb]:border-[#888] [&::-webkit-slider-thumb]:bg-white"
      />
      <button aria-label="放大">
        <svg width="15" height="15"><path d="M0 7.500h15M7.500 0v15" stroke="#555" strokeWidth="2.500" /></svg>
      </button>
    </footer>
  )
}

export default function App() {
  return (
    <div
      lang="zh-CN"
      className="flex h-screen flex-col overflow-hidden bg-[#f4f4f4] font-['Noto_Sans_CJK_SC',sans-serif] text-[15px] leading-5 text-[#222]"
    >
      <MenuBar />
      <Toolbar />
      <TabRow />
      <div className="flex min-h-0 flex-1">
        <ProjectPanel />
        <TreePanel />
        <main className="flex min-w-0 flex-1 flex-col">
          <ItemGrid />
          <FeeGrid />
        </main>
      </div>
      <StatusBar />
    </div>
  )
}
